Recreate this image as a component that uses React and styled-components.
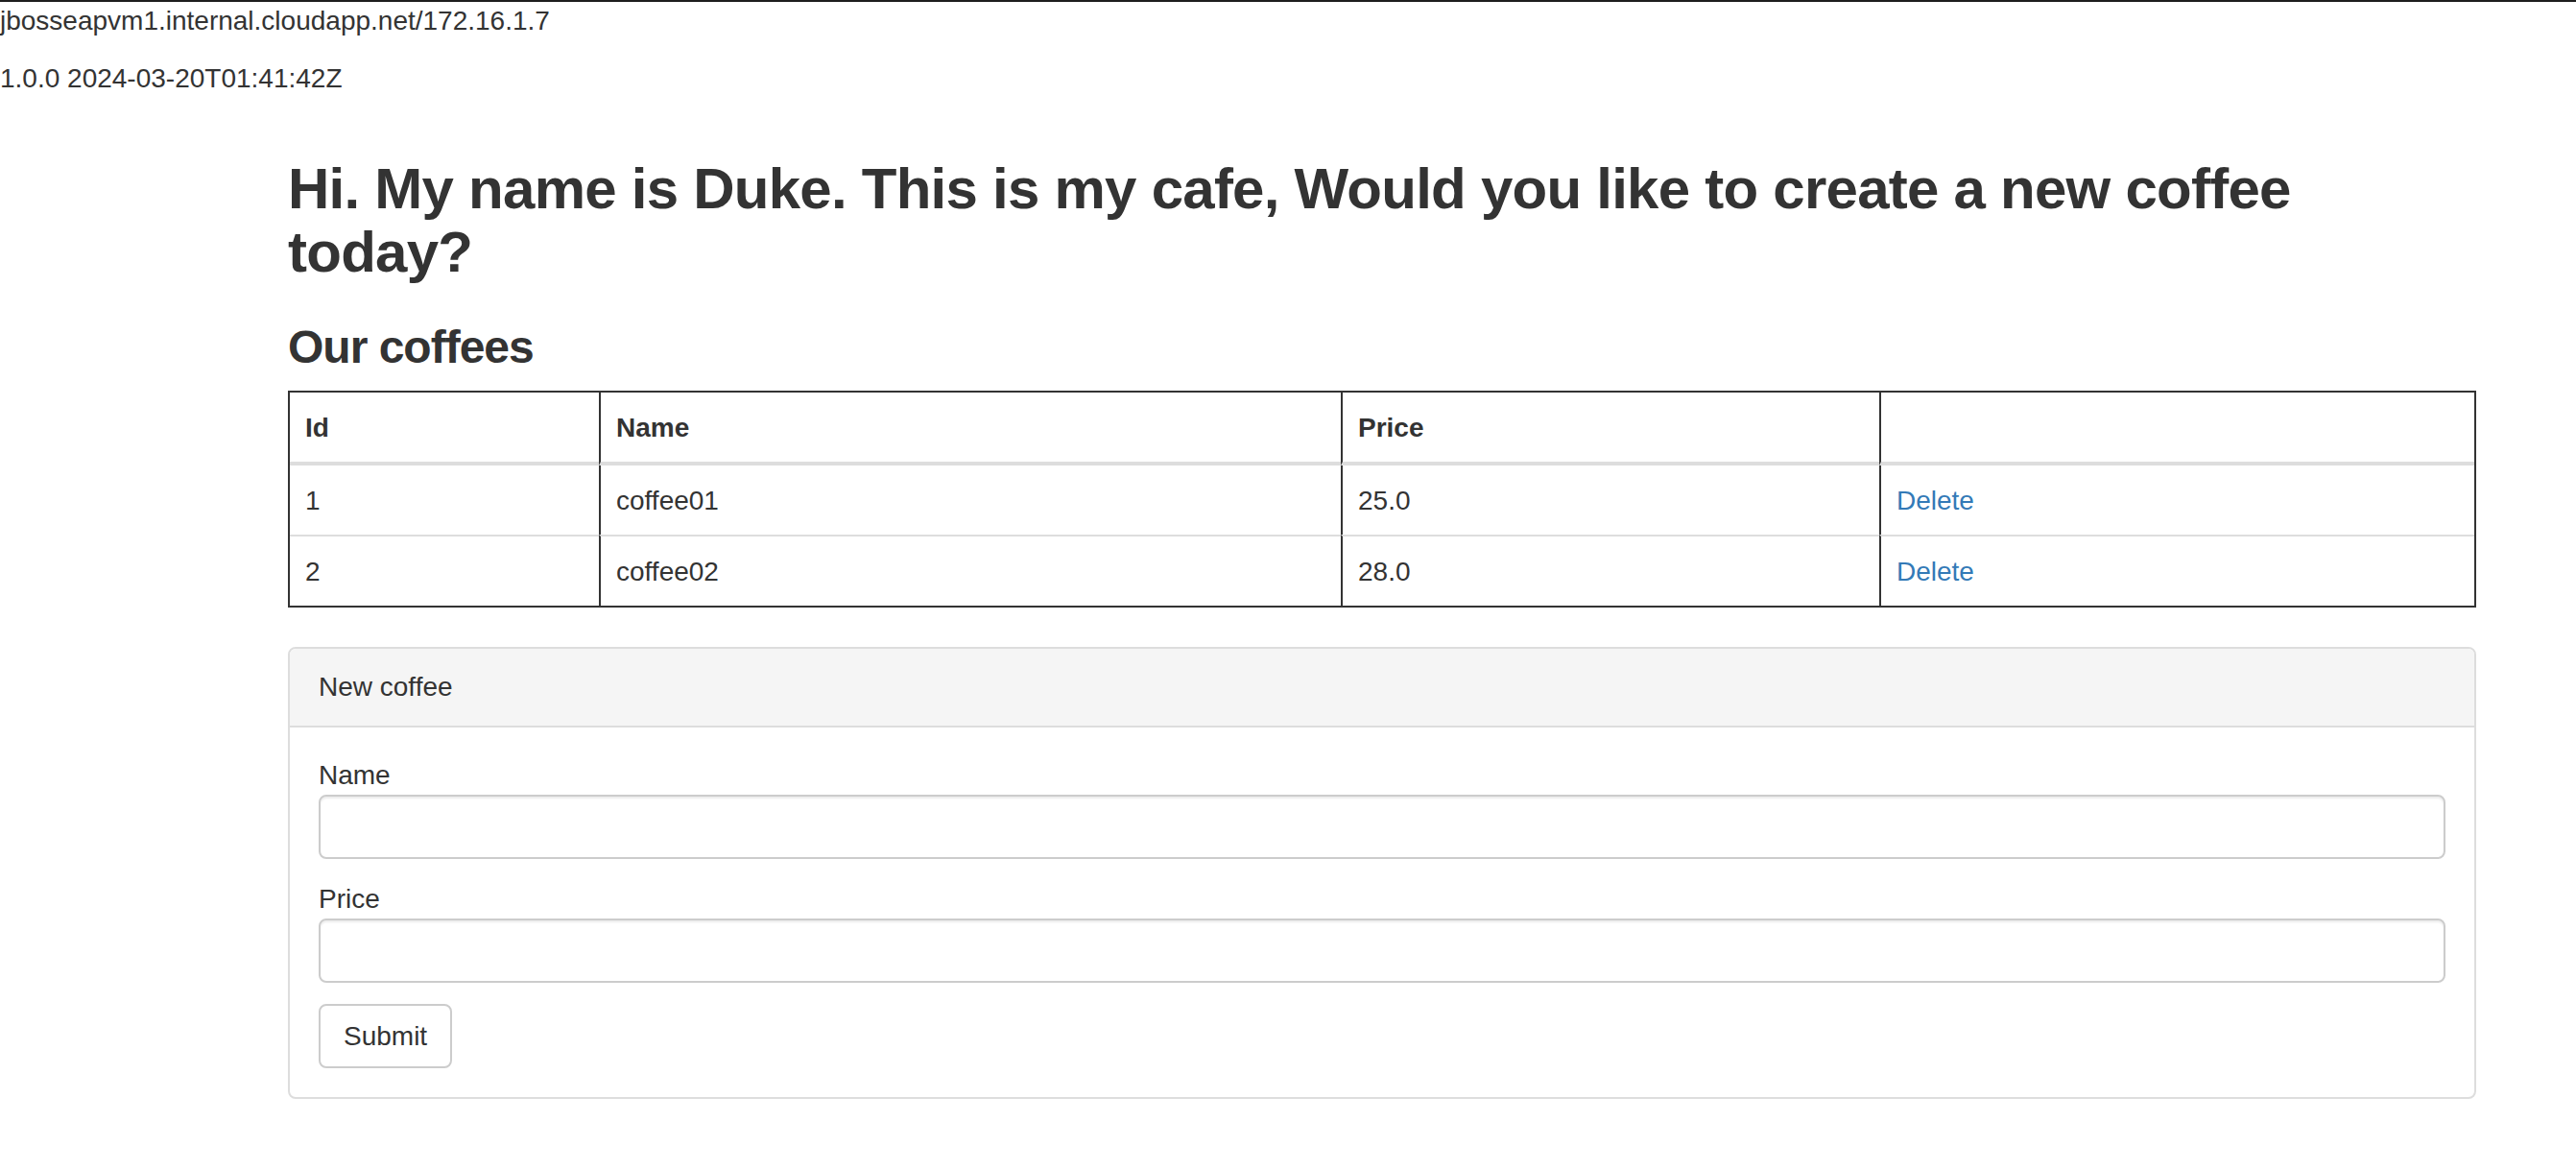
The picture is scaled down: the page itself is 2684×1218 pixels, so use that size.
import React from "react";
import styled, { createGlobalStyle } from "styled-components";

const GlobalStyle = createGlobalStyle`
  html, body {
    margin: 0;
    background: #fff;
  }
  body {
    border-top: 2px solid #1e1e1e;
    font-family: "Liberation Sans", Arial, Helvetica, sans-serif;
    font-size: 28px;
    line-height: 40px;
    color: #333;
  }
  * {
    box-sizing: border-box;
  }
`;

const HostLine = styled.div`
  margin-top: ${(p) => (p.$gap ? "20px" : "0")};
  line-height: 40px;
  white-space: nowrap;
`;

const Container = styled.main`
  width: 2580px;
  padding-left: 300px;
`;

const Title = styled.h2`
  margin: 62px 0 0;
  font-size: 60px;
  line-height: 66px;
  font-weight: 700;
  letter-spacing: -0.75px;
`;

const SectionTitle = styled.h3`
  margin: 39px 0 0;
  font-size: 48px;
  line-height: 53px;
  font-weight: 700;
  letter-spacing: -1px;
`;

const Table = styled.table`
  width: 100%;
  margin-top: 19px;
  table-layout: fixed;
  border-collapse: separate;
  border-spacing: 0;
  border: 2px solid #333;
`;

const Col = styled.col`
  width: ${(p) => p.$w}px;
`;

const HeadCell = styled.th`
  padding: 17px 16px 15px;
  text-align: left;
  font-weight: 700;
  border-bottom: 4px solid #ddd;
  border-left: ${(p) => (p.$first ? "0" : "2px solid #333")};
`;

const Cell = styled.td`
  padding: 17px 16px 15px;
  border-left: ${(p) => (p.$first ? "0" : "2px solid #333")};
  border-top: ${(p) => (p.$top ? "0" : "2px solid #ddd")};
`;

const DeleteLink = styled.a`
  color: #337ab7;
  text-decoration: none;
  cursor: pointer;
`;

const Panel = styled.section`
  margin-top: 41px;
  border: 2px solid #ddd;
  border-radius: 8px;
  overflow: hidden;
`;

const PanelHeading = styled.div`
  padding: 20px 30px;
  background: #f5f5f5;
  border-bottom: 2px solid #ddd;
`;

const PanelBody = styled.form`
  padding: 30px;
  display: flex;
  flex-direction: column;
  align-items: flex-start;
`;

const FormGroup = styled.div`
  width: 100%;
  margin-bottom: 22px;
`;

const Label = styled.label`
  display: block;
  line-height: 40px;
`;

const Input = styled.input`
  display: block;
  width: 100%;
  height: 67px;
  padding: 12px 24px;
  font: inherit;
  color: #555;
  background: #fff;
  border: 2px solid #ccc;
  border-radius: 8px;
  box-shadow: inset 0 2px 2px rgba(0, 0, 0, 0.075);
  outline: none;
`;

const SubmitButton = styled.button`
  height: 67px;
  padding: 0 24px;
  font: inherit;
  color: #333;
  background: #fff;
  border: 2px solid #ccc;
  border-radius: 8px;
  cursor: pointer;
`;

const coffees = [
  { id: 1, name: "coffee01", price: "25.0" },
  { id: 2, name: "coffee02", price: "28.0" },
];

const columns = [322, 773, 561, 620];

export default function App() {
  return (
    <>
      <GlobalStyle />
      <HostLine>jbosseapvm1.internal.cloudapp.net/172.16.1.7</HostLine>
      <HostLine $gap>1.0.0 2024-03-20T01:41:42Z</HostLine>
      <Container>
        <Title>
          Hi. My name is Duke. This is my cafe, Would you like to create a new coffee today?
        </Title>
        <SectionTitle>Our coffees</SectionTitle>
        <Table>
          <colgroup>
            {columns.map((w, i) => (
              <Col key={i} $w={w} />
            ))}
          </colgroup>
          <thead>
            <tr>
              <HeadCell $first>Id</HeadCell>
              <HeadCell>Name</HeadCell>
              <HeadCell>Price</HeadCell>
              <HeadCell />
            </tr>
          </thead>
          <tbody>
            {coffees.map((c, i) => (
              <tr key={c.id}>
                <Cell $first $top={i === 0}>{c.id}</Cell>
                <Cell $top={i === 0}>{c.name}</Cell>
                <Cell $top={i === 0}>{c.price}</Cell>
                <Cell $top={i === 0}>
                  <DeleteLink>Delete</DeleteLink>
                </Cell>
              </tr>
            ))}
          </tbody>
        </Table>
        <Panel>
          <PanelHeading>New coffee</PanelHeading>
          <PanelBody onSubmit={(e) => e.preventDefault()}>
            <FormGroup>
              <Label htmlFor="name">Name</Label>
              <Input id="name" type="text" />
            </FormGroup>
            <FormGroup>
              <Label htmlFor="price">Price</Label>
              <Input id="price" type="text" />
            </FormGroup>
            <SubmitButton type="submit">Submit</SubmitButton>
          </PanelBody>
        </Panel>
      </Container>
    </>
  );
}
